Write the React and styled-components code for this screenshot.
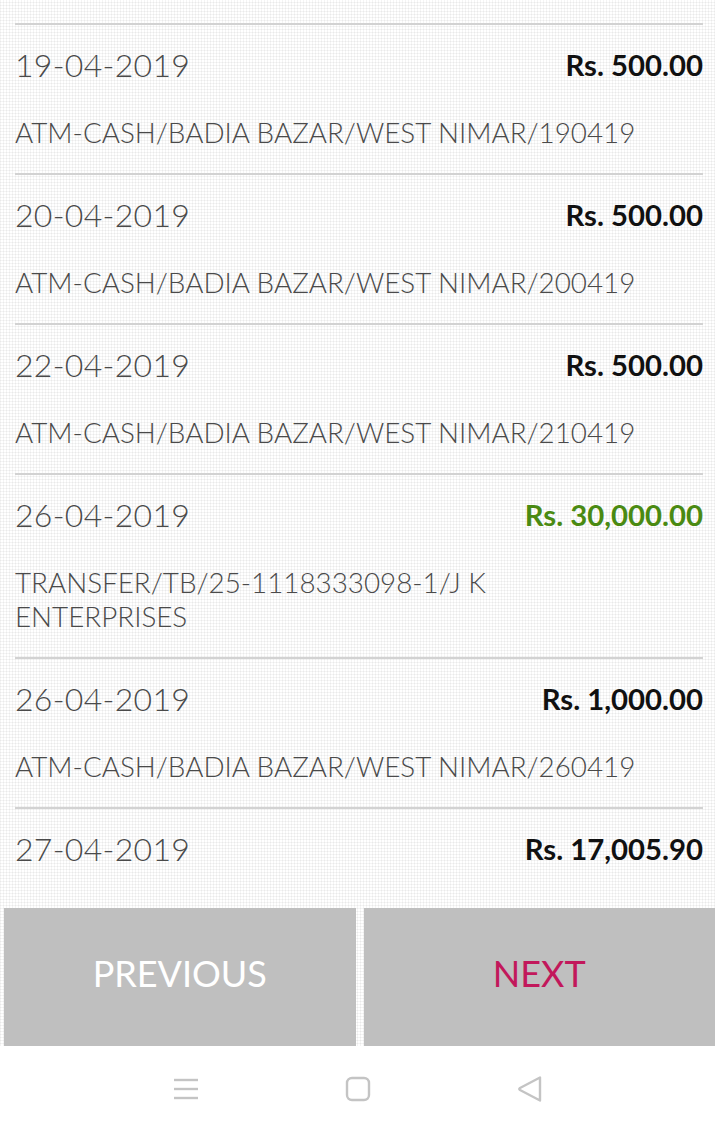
import React from 'react';
import styled, { createGlobalStyle } from 'styled-components';

const rows = [
    { date: '19-04-2019', amount: 'Rs. 500.00', desc: 'ATM-CASH/BADIA BAZAR/WEST NIMAR/190419' },
    { date: '20-04-2019', amount: 'Rs. 500.00', desc: 'ATM-CASH/BADIA BAZAR/WEST NIMAR/200419' },
    { date: '22-04-2019', amount: 'Rs. 500.00', desc: 'ATM-CASH/BADIA BAZAR/WEST NIMAR/210419' },
    { date: '26-04-2019', amount: 'Rs. 30,000.00', desc: 'TRANSFER/TB/25-1118333098-1/J K ENTERPRISES', credit: true },
    { date: '26-04-2019', amount: 'Rs. 1,000.00', desc: 'ATM-CASH/BADIA BAZAR/WEST NIMAR/260419' },
    { date: '27-04-2019', amount: 'Rs. 17,005.90', desc: 'ATM-CASH/BADIA BAZAR/WEST NIMAR/270419' },
];

const App = () => {
    return (
        <>
            <GlobalStyle />
            <Screen>
                <List>
                    {rows.map((r, i) => (
                        <Row key={i}>
                            <TopLine>
                                <DateText>{r.date}</DateText>
                                <Amount $credit={r.credit}>{r.amount}</Amount>
                            </TopLine>
                            <Desc>{r.desc}</Desc>
                        </Row>
                    ))}
                </List>
                <ButtonBar>
                    <PageButton>PREVIOUS</PageButton>
                    <PageButton $active>NEXT</PageButton>
                </ButtonBar>
                <NavBar>
                    <NavIcon>
                        <svg width="26" height="24" viewBox="0 0 26 24">
                            <g stroke="#c4c4c4" strokeWidth="2.4">
                                <line x1="1" y1="3" x2="25" y2="3" />
                                <line x1="1" y1="12" x2="25" y2="12" />
                                <line x1="1" y1="21" x2="25" y2="21" />
                            </g>
                        </svg>
                    </NavIcon>
                    <NavIcon>
                        <svg width="26" height="26" viewBox="0 0 26 26">
                            <rect x="2" y="2" width="22" height="22" rx="5" fill="none" stroke="#c4c4c4" strokeWidth="2.4" />
                        </svg>
                    </NavIcon>
                    <NavIcon>
                        <svg width="26" height="28" viewBox="0 0 26 28">
                            <path d="M23 2.5 L23 25.5 L3 15 Q1.5 14 3 13 Z" fill="none" stroke="#c4c4c4" strokeWidth="2.4" strokeLinejoin="round" />
                        </svg>
                    </NavIcon>
                </NavBar>
            </Screen>
        </>
    );
};

const GlobalStyle = createGlobalStyle`
    html, body { margin: 0; padding: 0; }
    body { font-family: Lato, "Open Sans", sans-serif; }
`;

const Screen = styled.div`
    width: 715px;
    height: 1134px;
    display: flex;
    flex-direction: column;
    overflow: hidden;
`;

const gridBg = `
    background-color: #ffffff;
    background-image:
        linear-gradient(90deg, rgba(0,0,0,0.045) 1px, transparent 1px),
        linear-gradient(0deg, rgba(0,0,0,0.045) 1px, transparent 1px);
    background-size: 3px 3px;
`;

const List = styled.div`
    height: 900px;
    flex-shrink: 0;
    overflow: hidden;
    padding: 23px 12px 0 15px;
    box-sizing: border-box;
    ${gridBg}
`;

const Row = styled.div`
    border-top: 2px solid #d2d2d2;
    padding: 19px 0 23px;
    display: flex;
    flex-direction: column;
    gap: 32px;
`;

const TopLine = styled.div`
    display: flex;
    justify-content: space-between;
    align-items: center;
    height: 40px;
`;

const DateText = styled.span`
    font-size: 32px;
    font-weight: 300;
    color: #4a4a4a;
    letter-spacing: 0.3px;
`;

const Amount = styled.span`
    font-size: 29.3px;
    font-weight: 700;
    color: ${p => (p.$credit ? '#4a8a12' : '#111111')};
`;

const Desc = styled.div`
    font-size: 27.8px;
    font-weight: 300;
    color: #4a4a4a;
    line-height: 34px;
    max-width: 645px;
`;

const ButtonBar = styled.div`
    height: 146px;
    flex-shrink: 0;
    box-sizing: border-box;
    display: flex;
    gap: 8px;
    padding: 8px 0 0 4px;
    ${gridBg}
`;

const PageButton = styled.div`
    flex: 1;
    background: #bfbfbf;
    display: flex;
    align-items: center;
    justify-content: center;
    padding-bottom: 8px;
    font-size: 36px;
    font-weight: 400;
    color: ${p => (p.$active ? '#c2185b' : '#ffffff')};
`;

const NavBar = styled.div`
    flex: 1;
    background: #ffffff;
    display: flex;
    justify-content: center;
    align-items: center;
    gap: 146px;
    padding-bottom: 2px;
`;

const NavIcon = styled.div`
    width: 26px;
    display: flex;
    justify-content: center;
`;

export default App;
